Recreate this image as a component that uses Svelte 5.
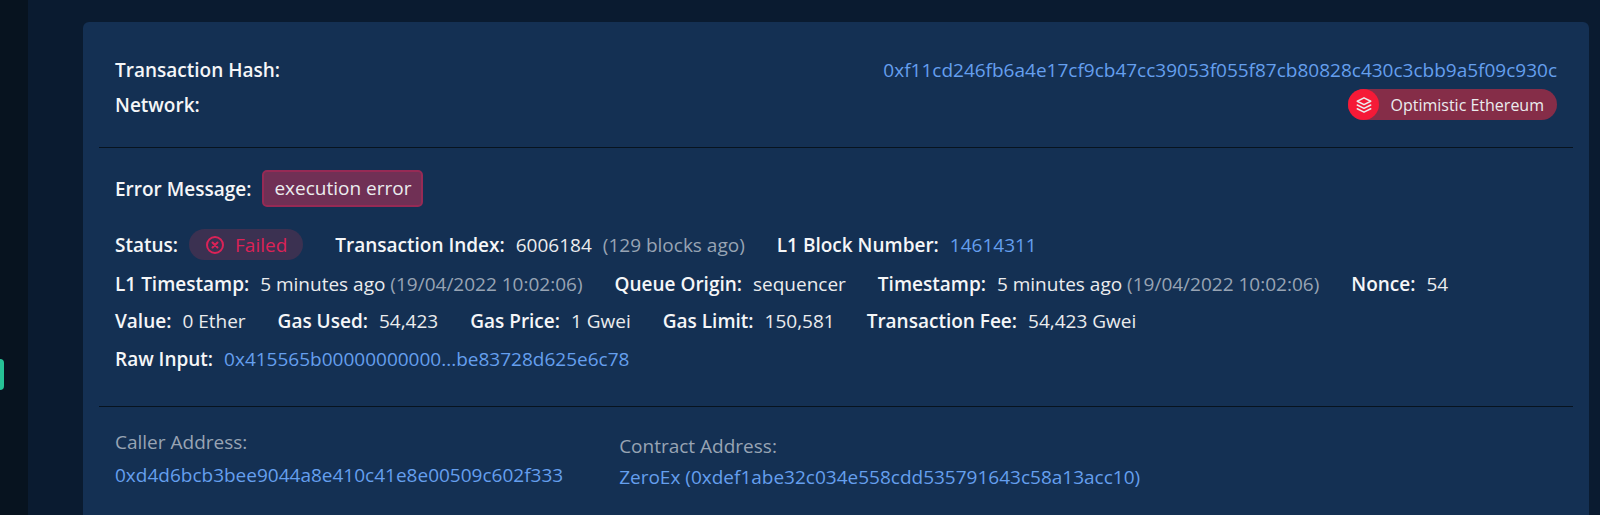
<script>
  const hash = "0xf11cd246fb6a4e17cf9cb47cc39053f055f87cb80828c430c3cbb9a5f09c930c";

  const timeRow = [
    { label: "L1 Timestamp", value: "5 minutes ago", note: "(19/04/2022 10:02:06)" },
    { label: "Queue Origin", value: "sequencer" },
    { label: "Timestamp", value: "5 minutes ago", note: "(19/04/2022 10:02:06)" },
    { label: "Nonce", value: "54" },
  ];

  const gasRow = [
    { label: "Value", value: "0 Ether" },
    { label: "Gas Used", value: "54,423" },
    { label: "Gas Price", value: "1 Gwei" },
    { label: "Gas Limit", value: "150,581" },
    { label: "Transaction Fee", value: "54,423 Gwei" },
  ];
</script>

{#snippet field(item)}
  <div class="field">
    <span class="label">{item.label}:</span>
    <span>{item.value} {#if item.note}<span class="muted">{item.note}</span>{/if}</span>
  </div>
{/snippet}

<div class="page">
  <aside class="sidebar">
    <button class="handle" aria-label="Toggle sidebar"></button>
  </aside>

  <main class="content">
    <div class="card">
      <section class="summary">
        <div class="summary-row">
          <span class="label">Transaction Hash:</span>
          <a href="#tx">{hash}</a>
        </div>
        <div class="summary-row">
          <span class="label">Network:</span>
          <span class="network">
            <span class="network-icon">
              <svg viewBox="0 0 24 24" width="18" height="18">
                <path d="M12 2.5 L21 7 L12 11.5 L3 7 Z" />
                <path d="M3 12 L12 16.5 L21 12" />
                <path d="M3 17 L12 21.5 L21 17" />
              </svg>
            </span>
            Optimistic Ethereum
          </span>
        </div>
      </section>

      <section class="details">
        <div class="row error-row">
          <div class="field">
            <span class="label">Error Message:</span>
            <span class="error">execution error</span>
          </div>
        </div>

        <div class="row status-row">
          <div class="field">
            <span class="label">Status:</span>
            <span class="status">
              <svg viewBox="0 0 20 20" width="20" height="20">
                <circle cx="10" cy="10" r="8" />
                <path d="M7.5 7.5 L12.5 12.5 M12.5 7.5 L7.5 12.5" />
              </svg>
              Failed
            </span>
          </div>
          <div class="field">
            <span class="label">Transaction Index:</span>
            <span>6006184</span>
            <span class="muted">(129 blocks ago)</span>
          </div>
          <div class="field">
            <span class="label">L1 Block Number:</span>
            <a href="#block">14614311</a>
          </div>
        </div>

        <div class="row">
          {#each timeRow as item}
            {@render field(item)}
          {/each}
        </div>

        <div class="row">
          {#each gasRow as item}
            {@render field(item)}
          {/each}
        </div>

        <div class="row raw-row">
          <div class="field">
            <span class="label">Raw Input:</span>
            <a href="#input">0x415565b00000000000...be83728d625e6c78</a>
          </div>
        </div>
      </section>

      <section class="addresses">
        <div class="address">
          <span class="muted">Caller Address:</span>
          <a href="#caller">0xd4d6bcb3bee9044a8e410c41e8e00509c602f333</a>
        </div>
        <div class="address contract">
          <span class="muted">Contract Address:</span>
          <a href="#contract">ZeroEx (0xdef1abe32c034e558cdd535791643c58a13acc10)</a>
        </div>
      </section>
    </div>
  </main>
</div>

<style>
  :global(body) {
    background: #0a1b30;
  }

  .page {
    display: flex;
    min-height: 100vh;
    font-family: "Open Sans", "Noto Sans", sans-serif;
    font-size: 19px;
    line-height: 28px;
    color: #ebecee;
    white-space: nowrap;
  }

  .sidebar {
    position: relative;
    width: 28px;
    flex-shrink: 0;
    background: #07131f;
  }

  .handle {
    position: absolute;
    left: 0;
    top: 359px;
    width: 4px;
    height: 31px;
    padding: 0;
    border: 0;
    border-radius: 0 4px 4px 0;
    background: #26c296;
  }

  .content {
    flex: 1;
    display: flex;
    min-width: 0;
    padding: 22px 11px 0 55px;
  }

  .card {
    flex: 1;
    min-width: 0;
    padding: 0 16px;
    border-radius: 6px 6px 0 0;
    background: #143053;
  }

  a {
    color: #659fee;
    text-decoration: none;
  }

  .label {
    font-weight: 600;
    color: #f5f6f8;
  }

  .muted {
    color: #98a4b4;
  }

  .summary {
    padding: 30px 16px 25px;
    border-bottom: 1px solid #07131f;
  }

  .summary-row {
    display: flex;
    align-items: center;
    justify-content: space-between;
    height: 35px;
  }

  .network {
    display: flex;
    align-items: center;
    gap: 11px;
    height: 31px;
    padding-right: 13px;
    border-radius: 16px;
    background: #852d48;
    font-size: 16px;
  }

  .network-icon {
    display: flex;
    align-items: center;
    justify-content: center;
    width: 31px;
    height: 31px;
    border-radius: 50%;
    background: #f51a37;
  }

  svg {
    fill: none;
    stroke: currentColor;
    stroke-width: 2;
    stroke-linejoin: round;
    stroke-linecap: round;
  }

  .details {
    padding: 22px 16px 28px;
    border-bottom: 1px solid #07131f;
  }

  .row {
    display: flex;
    align-items: center;
    gap: 32px;
    height: 37px;
  }

  .field {
    display: flex;
    align-items: center;
    gap: 11px;
  }

  .error-row {
    margin-bottom: 17px;
  }

  .error {
    padding: 3px 10px;
    border: 2px solid #962a55;
    border-radius: 5px;
    background: #703055;
    line-height: 27px;
  }

  .status-row {
    height: 41px;
  }

  .raw-row {
    height: 39px;
  }

  .status {
    display: flex;
    align-items: center;
    gap: 10px;
    height: 31px;
    padding: 0 16px;
    border-radius: 16px;
    background: #3b3151;
    color: #dc2257;
  }

  .addresses {
    display: flex;
    align-items: flex-start;
    gap: 56px;
    padding: 21px 16px;
  }

  .address {
    display: flex;
    flex-direction: column;
    gap: 5px;
  }

  .contract {
    gap: 3px;
    padding-top: 4px;
  }
</style>
